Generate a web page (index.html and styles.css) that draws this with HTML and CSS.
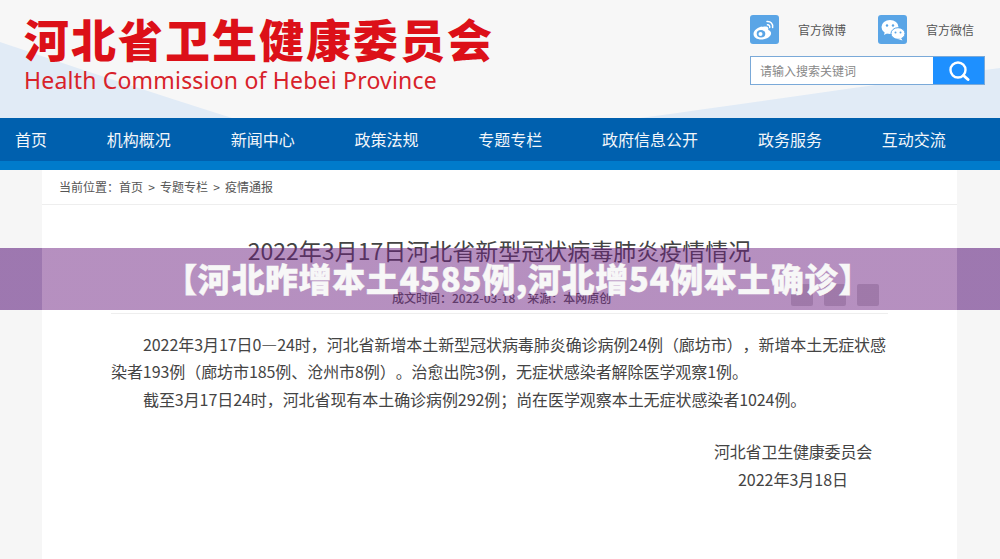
FILE: index.html
```html
<!DOCTYPE html>
<html lang="zh-CN">
<head>
    <meta charset="UTF-8">
    <meta name="viewport" content="width=device-width, initial-scale=1.0">
    <title>河北省卫生健康委员会</title>
    <link rel="stylesheet" href="styles.css">
</head>
<body>
    <header class="header">
        <svg class="header-bg" width="1000" height="118" viewBox="0 0 1000 118">
            <path d="M0 42 C70 66 150 92 232 118 L0 118 Z" fill="#e1ebf6"/>
            <path d="M1000 68 C880 84 770 100 640 118 L1000 118 Z" fill="#e1ebf6"/>
        </svg>
        <div class="logo">
            <div class="logo-cn">河北省卫生健康委员会</div>
            <div class="logo-en">Health Commission of Hebei Province</div>
        </div>
        <div class="header-side">
            <div class="social">
                <a class="social-item">
                    <span class="social-icon">
                        <svg width="29" height="29" viewBox="0 0 29 29">
                            <path d="M12.500 11.500c-5 .6-9 4.200-9 7.500 0 3.400 3.800 5.700 8.300 5.500 5-.2 9.300-2.900 9.300-6.200 0-2-1.900-2.900-3-3.200.6-1.500.3-3.200-2-3.500-1-.1-2.400 0-3.600 .4z" fill="#fff"/>
                            <ellipse cx="11" cy="18.800" rx="4.300" ry="3.700" fill="#5aa5e6"/>
                            <circle cx="10.500" cy="19" r="2" fill="#fff"/>
                            <path d="M17 6.500c3.600-.4 6.300 2.400 5.600 6M17.500 9.800c1.500-.2 2.500 1 2.200 2.600" fill="none" stroke="#fff" stroke-width="1.500" stroke-linecap="round"/>
                        </svg>
                    </span>
                    <span class="social-label">官方微博</span>
                </a>
                <a class="social-item">
                    <span class="social-icon">
                        <svg width="29" height="29" viewBox="0 0 29 29">
                            <ellipse cx="12" cy="12" rx="8.500" ry="7" fill="#fff"/>
                            <path d="M7 16l-1 4 4.500-2.500z" fill="#fff"/>
                            <circle cx="9" cy="10.500" r="1.200" fill="#5aa5e6"/>
                            <circle cx="15" cy="10.500" r="1.200" fill="#5aa5e6"/>
                            <ellipse cx="20" cy="18.500" rx="7" ry="5.800" fill="#fff" stroke="#5aa5e6" stroke-width="1"/>
                            <path d="M23 23l1.500 2.500-4.500-1.500z" fill="#fff"/>
                            <circle cx="17.500" cy="17.500" r="1" fill="#5aa5e6"/>
                            <circle cx="22.500" cy="17.500" r="1" fill="#5aa5e6"/>
                        </svg>
                    </span>
                    <span class="social-label">官方微信</span>
                </a>
            </div>
            <div class="search">
                <span class="search-input">请输入搜索关键词</span>
                <span class="search-btn">
                    <svg width="22" height="22" viewBox="0 0 22 22">
                        <circle cx="10" cy="10" r="7.500" fill="none" stroke="#fff" stroke-width="2.400"/>
                        <path d="M15.500 15.500l4.500 4" stroke="#fff" stroke-width="3" stroke-linecap="round"/>
                    </svg>
                </span>
            </div>
        </div>
    </header>

    <nav class="nav">
        <a>首页</a>
        <a>机构概况</a>
        <a>新闻中心</a>
        <a>政策法规</a>
        <a>专题专栏</a>
        <a>政府信息公开</a>
        <a>政务服务</a>
        <a>互动交流</a>
    </nav>

    <main class="container">
        <div class="crumb">当前位置：首页 &gt; 专题专栏 &gt; 疫情通报</div>
        <article class="article">
            <h1 class="article-title">2022年3月17日河北省新型冠状病毒肺炎疫情情况</h1>
            <div class="meta">
                <span class="meta-text">成文时间：2022-03-18　来源：本网原创</span>
                <div class="share">
                    <span></span>
                    <span></span>
                    <span></span>
                </div>
            </div>
            <div class="content">
                <p>2022年3月17日0—24时，河北省新增本土新型冠状病毒肺炎确诊病例24例（廊坊市），新增本土无症状感染者193例（廊坊市185例、沧州市8例）。治愈出院3例，无症状感染者解除医学观察1例。</p>
                <p>截至3月17日24时，河北省现有本土确诊病例292例；尚在医学观察本土无症状感染者1024例。</p>
            </div>
            <div class="sign">
                <div class="sign-org">河北省卫生健康委员会</div>
                <div>2022年3月18日</div>
            </div>
        </article>
    </main>

    <div class="band">【河北昨增本土4585例,河北增54例本土确诊】</div>
</body>
</html>
```

FILE: styles.css
```css
html, body {
    margin: 0;
    padding: 0;
}
body {
    background-color: #f6f6f6;
    font-family: "Noto Sans CJK SC", "Noto Sans", sans-serif;
    color: #444;
    overflow: hidden;
    position: relative;
}
.header {
    position: relative;
    height: 118px;
    background-color: #f7f7f7;
    display: flex;
    justify-content: space-between;
}
.header-bg {
    position: absolute;
    left: 0;
    top: 0;
}
.logo {
    position: relative;
    padding: 12px 0 0 24px;
    color: #dc1018;
}
.logo-cn {
    font-size: 45px;
    font-weight: 900;
    letter-spacing: 2px;
    line-height: 54px;
    white-space: nowrap;
}
.logo-en {
    font-family: "Noto Sans", sans-serif;
    font-size: 23px;
    line-height: 28px;
    letter-spacing: 0.2px;
    color: #d8222a;
    white-space: nowrap;
}
.header-side {
    position: relative;
    width: 235px;
    margin-right: 15px;
    padding-top: 15px;
}
.social {
    display: flex;
    height: 29px;
}
.social-item {
    display: flex;
    flex: none;
    align-items: center;
    width: 128px;
}
.social-icon {
    width: 29px;
    height: 29px;
    background-color: #5aa5e6;
    border-radius: 3px;
    display: block;
    overflow: hidden;
}
.social-icon svg {
    display: block;
}
.social-label {
    margin-left: 19px;
    font-size: 12px;
    color: #555;
}
.search {
    display: flex;
    height: 29px;
    margin-top: 12px;
    background-color: #fff;
    border: 1px solid #7aa9d8;
    box-sizing: border-box;
}
.search-input {
    flex: 1;
    padding-left: 9px;
    font-size: 12px;
    line-height: 27px;
    color: #888;
}
.search-btn {
    width: 51px;
    background-color: #1e90ff;
    display: flex;
    align-items: center;
    justify-content: center;
}
.nav {
    height: 43px;
    border-bottom: 9px solid #007bcb;
    background-color: #0060ae;
    display: flex;
    gap: 59.800px;
    padding-left: 15px;
    font-size: 16px;
    line-height: 43px;
    color: #f2f6fa;
}
.container {
    width: 915px;
    min-height: 389px;
    margin-left: 42px;
    background-color: #fff;
}
.crumb {
    height: 34px;
    padding-left: 17px;
    border-bottom: 1px solid #eee;
    font-size: 12px;
    line-height: 34px;
    word-spacing: 2.500px;
    color: #555;
}
.article {
    padding: 0 69px;
}
.article-title {
    margin: 0;
    padding-top: 29px;
    font-size: 23px;
    font-weight: 400;
    line-height: 32px;
    text-align: center;
    color: #444;
    white-space: nowrap;
}
.meta {
    height: 22px;
    margin-top: 18px;
    padding-bottom: 7px;
    border-bottom: 1px solid #eee;
    display: flex;
    justify-content: space-between;
}
.meta-text {
    margin-left: 281px;
    font-size: 12px;
    font-weight: 500;
    line-height: 28px;
    color: #555;
}
.share {
    display: flex;
    gap: 11px;
    margin-right: 9px;
}
.share span {
    width: 22px;
    height: 22px;
    border-radius: 2px;
    background-color: #d2d2d2;
}
.content {
    margin-right: -6px;
    padding-top: 16.500px;
    font-size: 16px;
    line-height: 27.500px;
    letter-spacing: -0.070px;
    text-spacing-trim: space-all;
}
.content p {
    margin: 0;
    text-indent: 2em;
}
.sign {
    width: 160px;
    margin: 24px 0 0 auto;
    padding-right: 15px;
    font-size: 16px;
    line-height: 28px;
    text-align: center;
}
.sign-org {
    letter-spacing: -0.200px;
}
.band {
    position: absolute;
    left: 0;
    top: 248px;
    width: 100%;
    height: 62px;
    box-sizing: border-box;
    padding-left: 36px;
    background: linear-gradient(90deg, rgba(120, 66, 146, 0.7) 42px, rgba(109, 33, 129, 0.5) 42px, rgba(109, 33, 129, 0.5) 957px, rgba(120, 66, 146, 0.7) 957px);
    font-size: 33px;
    font-weight: 900;
    letter-spacing: 0.600px;
    line-height: 60px;
    text-align: center;
    color: #f7f7f7;
    -webkit-text-stroke: 0.400px #f7f7f7;
    white-space: nowrap;
}
```
